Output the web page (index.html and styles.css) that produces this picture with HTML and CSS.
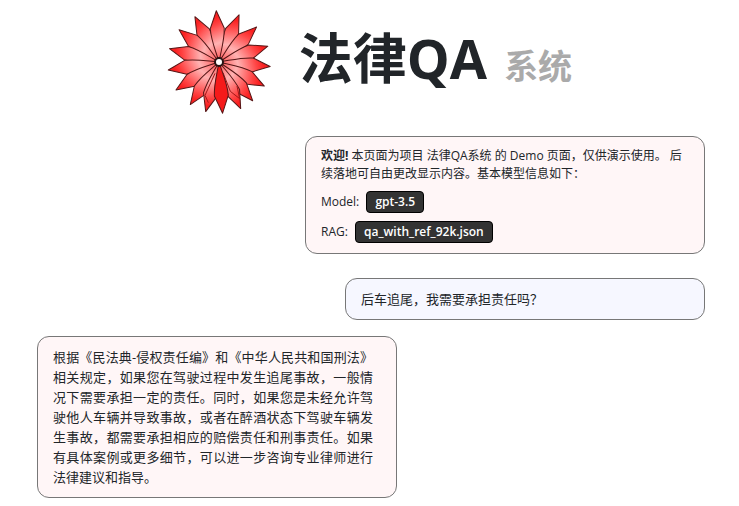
FILE: index.html
```html
<!DOCTYPE html>
<html lang="zh-CN">
<head>
<meta charset="utf-8">
<title>法律QA 系统</title>
<link rel="stylesheet" href="styles.css">
</head>
<body>
<header class="header">
<svg class="logo" viewBox="24 31 312 312" aria-hidden="true">
<defs>
<linearGradient id="shade" gradientUnits="userSpaceOnUse" x1="-22" y1="-128" x2="16" y2="-20"><stop offset="0" stop-color="#fa2020"/><stop offset=".2" stop-color="#ff4646"/><stop offset=".65" stop-color="#ffb2b2"/><stop offset="1" stop-color="#ff6a6a"/></linearGradient>
<path id="petal" d="M0 0C-8 -34 -20 -64 -21 -101L0 -154L21 -101C20 -64 8 -34 0 0Z"/>
</defs>
<circle cx="180" cy="187" r="82" fill="#ff7777"/>
<g transform="translate(180 187)" fill="url(#shade)" stroke="#551616" stroke-width="3" stroke-linejoin="round">
<use href="#petal" transform="rotate(23)"/>
<use href="#petal" transform="rotate(47)"/>
<use href="#petal" transform="rotate(72)"/>
<use href="#petal" transform="rotate(95)"/>
<use href="#petal" transform="rotate(118)"/>
<use href="#petal" transform="rotate(139)"/>
<use href="#petal" transform="rotate(155)"/>
<use href="#petal" transform="rotate(332)"/>
<use href="#petal" transform="rotate(309)"/>
<use href="#petal" transform="rotate(285)"/>
<use href="#petal" transform="rotate(261)"/>
<use href="#petal" transform="rotate(237)"/>
<use href="#petal" transform="rotate(214)"/>
<use href="#petal" transform="rotate(195)"/>
<use href="#petal" transform="rotate(-3)"/>
<path d="M12 32L34 88L62 110L54 72M-12 34L-42 100L-32 122" fill="none" stroke="#a01818"/>
<use href="#petal" fill="#f51a1a" transform="rotate(176)"/>
</g>
<circle cx="180" cy="187" r="12" fill="#fff" stroke="#2a1515" stroke-width="6"/>
</svg>
<h1 class="title">法律QA <small class="subtitle">系统</small></h1>
</header>
<main class="chat">
<section class="bubble intro">
<p class="text"><strong>欢迎!</strong> 本页面为项目 法律QA系统 的 Demo 页面，仅供演示使用。 后续落地可自由更改显示内容。基本模型信息如下：</p>
<p class="info">Model: <span class="badge">gpt-3.5</span></p>
<p class="info">RAG: <span class="badge">qa_with_ref_92k.json</span></p>
</section>
<section class="bubble question"><p class="text">后车追尾，我需要承担责任吗？</p></section>
<section class="bubble answer"><p class="text">根据《民法典-侵权责任编》和《中华人民共和国刑法》相关规定，如果您在驾驶过程中发生追尾事故，一般情况下需要承担一定的责任。同时，如果您是未经允许驾驶他人车辆并导致事故，或者在醉酒状态下驾驶车辆发生事故，都需要承担相应的赔偿责任和刑事责任。如果有具体案例或更多细节，可以进一步咨询专业律师进行法律建议和指导。</p></section>
</main>
</body>
</html>
```

FILE: styles.css
```css
* { box-sizing: border-box; }
body { margin: 0; background: #fff; color: #212529; font-family: "Open Sans", "Noto Sans CJK SC", sans-serif; }
p, h1 { margin: 0; }
.header { display: flex; justify-content: center; align-items: center; gap: 28px; padding: 10px 0; }
.logo { width: 104px; height: 104px; }
.title { font-size: 54px; line-height: 64px; font-weight: 700; }
.subtitle { margin-left: 3px; font-size: 34px; font-weight: 700; color: #aaa; }
.chat { display: flex; flex-direction: column; padding: 12px 34px 8px 37px; }
.bubble { border: 1px solid #777; border-radius: 12px; background: #fff6f7; padding: 10px 15px; }
.intro { align-self: flex-end; width: 400px; max-width: 100%; font-size: 12px; line-height: 18px; }
.info { margin-top: 8px; line-height: 22px; }
.badge { display: inline-block; margin-left: 4px; padding: 0 8px; border: 1px solid #000; border-radius: 4px; background: #333; color: #fff; font-weight: 600; line-height: 20px; }
.question { align-self: flex-end; width: 360px; max-width: 100%; margin-top: 24px; background: #f6f7ff; font-size: 13px; line-height: 20px; }
.answer { width: 360px; max-width: 100%; margin-top: 16px; padding-right: 23px; font-size: 13px; line-height: 20px; text-align: justify; }
```
